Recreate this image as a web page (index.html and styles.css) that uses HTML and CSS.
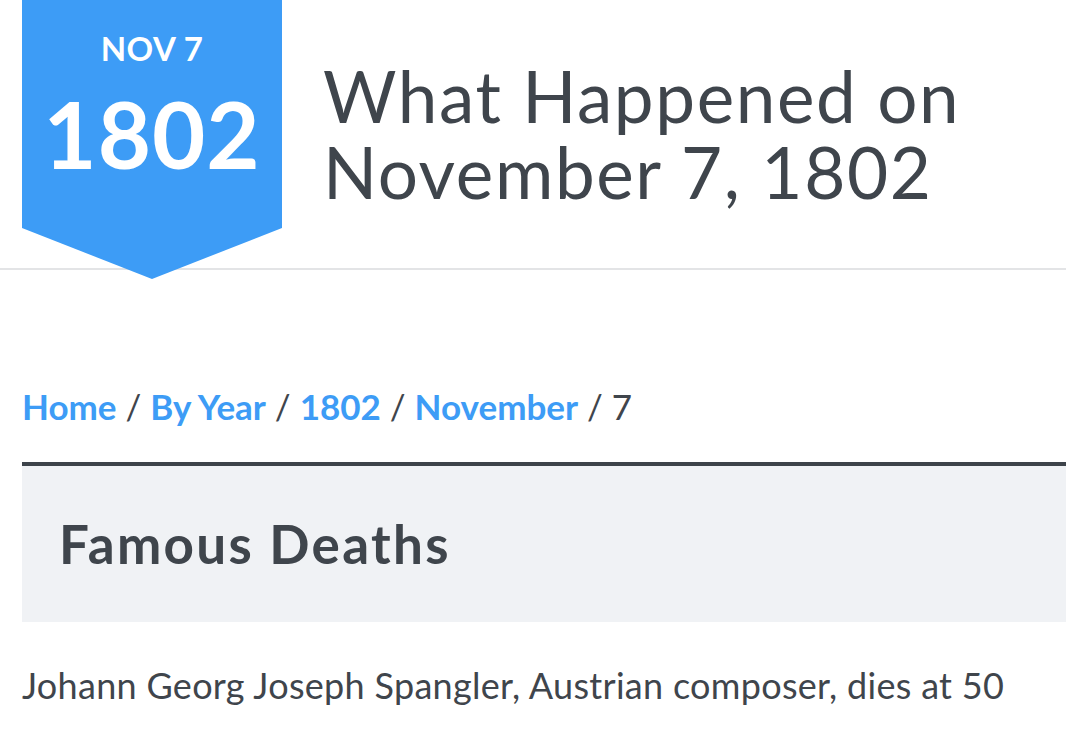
FILE: index.html
```html
<!DOCTYPE html>
<html>
<head>
    <meta name="viewport" content="width=device-width, initial-scale=1">
    <link rel="stylesheet" href="styles.css">
</head>
<body>
<header class="top">
    <div class="badge">
        <div class="badge-day">NOV 7</div>
        <div class="badge-year">1802</div>
    </div>
    <h1 class="title">What Happened on November 7, 1802</h1>
</header>

<nav class="crumbs">
    <a href="#">Home</a> / <a href="#">By Year</a> / <a href="#">1802</a> / <a href="#">November</a> / 7
</nav>

<section class="events">
    <h2 class="events-head">Famous Deaths</h2>
    <p class="event">Johann Georg Joseph Spangler, Austrian composer, dies at 50</p>
</section>
</body>
</html>
```

FILE: styles.css
```css
* {
    box-sizing: border-box;
}

body {
    margin: 0;
    font-family: Lato, "Open Sans", sans-serif;
    color: #3f454c;
    background: #fff;
    overflow: hidden;
}

.top {
    display: flex;
    align-items: flex-start;
    height: 270px;
    border-bottom: 2px solid #e3e4e6;
    padding-left: 22px;
}

.badge {
    width: 260px;
    height: 279px;
    flex: none;
    background: #3d9cf6;
    color: #fff;
    text-align: center;
    clip-path: polygon(0 0, 100% 0, 100% 228px, 50% 100%, 0 228px);
    position: relative;
    z-index: 1;
    padding-top: 28px;
}

.badge-day {
    font-weight: 700;
    font-size: 33px;
    line-height: 40px;
    letter-spacing: 0.5px;
}

.badge-year {
    margin-top: 16px;
    font-weight: 700;
    font-size: 92px;
    line-height: 100px;
    letter-spacing: 1px;
}

.title {
    margin: 58px 0 0 41px;
    font-weight: 400;
    font-size: 71px;
    line-height: 76px;
    letter-spacing: 1.6px;
    width: 720px;
}

.crumbs {
    margin: 110px 0 0 22px;
    font-size: 35px;
    line-height: 52px;
}

.crumbs a {
    color: #3d9cf6;
    font-weight: 700;
    text-decoration: none;
}

.events {
    margin: 30px 0 0 22px;
}

.events-head {
    margin: 0;
    width: 1100px;
    border-top: 4px solid #3d434a;
    background: #f0f2f5;
    height: 160px;
    padding: 0 0 0 37px;
    font-weight: 700;
    font-size: 53px;
    line-height: 156px;
    letter-spacing: 2.3px;
}

.event {
    margin: 38px 0 0;
    font-size: 36px;
    line-height: 50px;
    letter-spacing: 0.3px;
}
```
